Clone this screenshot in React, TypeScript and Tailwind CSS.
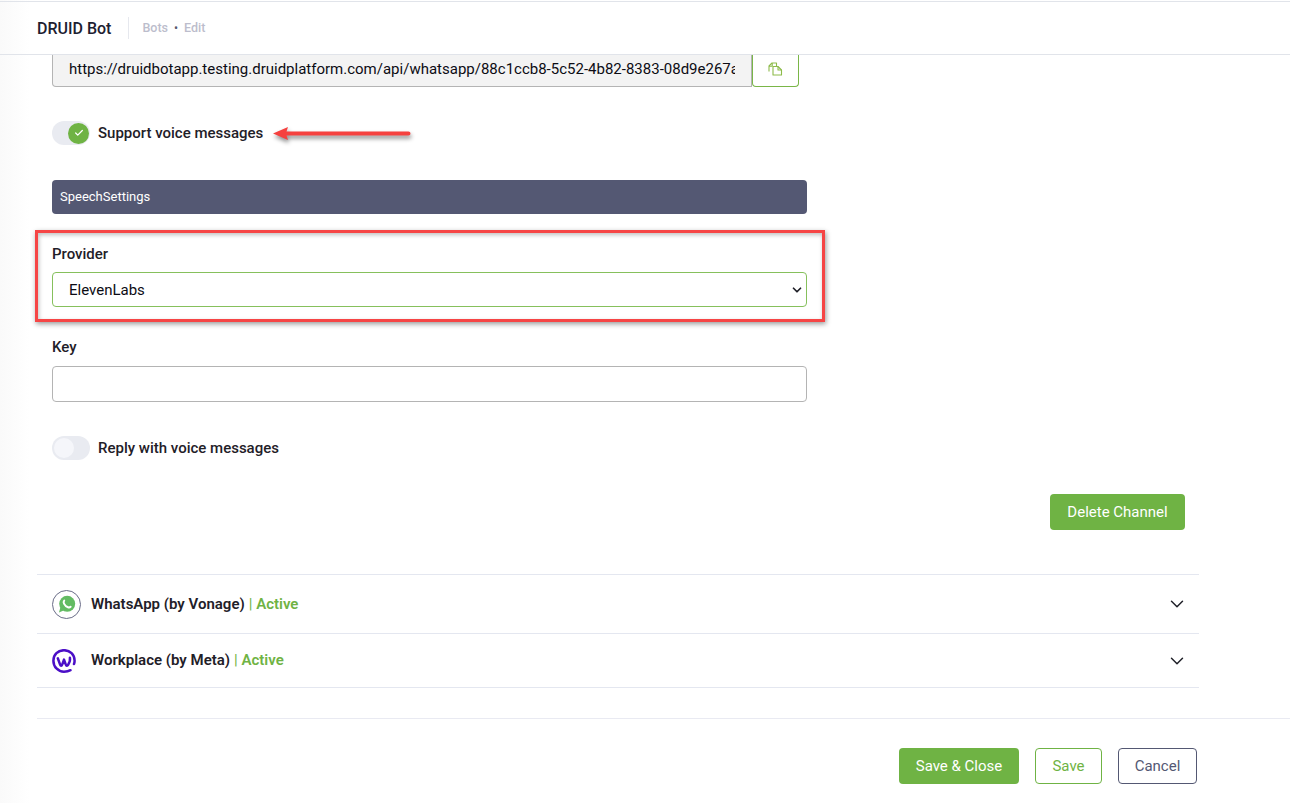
import React from 'react';
import { ChevronDown, Check } from 'lucide-react';

const CopyIcon = () => (
    <svg width="15" height="14" viewBox="0 0 15 14" fill="none" stroke="#8dbb4a" strokeWidth="1.1" strokeLinejoin="round">
        <path d="M1 9.5V4L4 1h4.5v3.5" />
        <path d="M1 4.2H4.2V1" />
        <path d="M5 4.5H10L13.5 8V13H5z" fill="#fff" />
        <path d="M10 4.5V8H13.5" />
    </svg>
);

const WhatsAppIcon = () => (
    <svg width="20" height="20" viewBox="0 0 20 20" fill="none">
        <circle cx="10.2" cy="9.8" r="8" fill="#63bb63" />
        <path d="M2 18.4L3.4 13.2L6.6 16.6z" fill="#63bb63" />
        <path d="M7.2 6.6C6.5 7.4 6.4 8.4 7 9.6C7.9 11.4 9.2 12.6 11 13.3C12 13.7 12.9 13.5 13.6 12.8" stroke="#fff" strokeWidth="2" strokeLinecap="round" />
    </svg>
);

const WorkplaceIcon = () => (
    <svg width="24" height="24" viewBox="0 0 24 24" fill="none" stroke="#4b0fc7" strokeWidth="2.5" strokeLinecap="round" strokeLinejoin="round">
        <path d="M18.5 21.2C16.8 22.2 14.4 22.7 12 22.7C6 22.7 1.4 17.8 1.4 11.7C1.4 5.7 6 1.2 12 1.2C18 1.2 22.6 5.7 22.6 11.7C22.6 13 22.4 14 22 15" />
        <path d="M5.8 9.3L8.1 15.6C8.6 17 9.7 17 10.2 15.6L12 10.6L13.8 15.6C14.3 17 15.4 17 16.1 15.8C17.4 13.6 18.5 11.3 17.9 8.8" />
    </svg>
);

const Toggle = ({ on, label }: { on?: boolean; label: string }) => (
    <div className="flex items-center gap-2">
        <div className="flex h-6 w-[38px] items-center justify-start rounded-full bg-[#e9ebf1]">
            {on ? (
                <div className="ml-4 flex h-[21px] w-[21px] items-center justify-center rounded-full bg-[#6fb344]">
                    <Check className="h-2.5 w-2.5 text-white" strokeWidth={3} />
                </div>
            ) : (
                <div className="ml-0.5 h-5 w-5 rounded-full bg-[#f5f6fa]" />
            )}
        </div>
        <span className="text-[15px] font-medium text-[#1f2028]">{label}</span>
    </div>
);

const ChannelRow = ({ name, icon, className }: { name: string; icon: React.ReactNode; className: string }) => (
    <div className={`flex items-center border-b border-[#e4e7f0] pl-[15px] pr-[11px] ${className}`}>
        <div className="flex w-[39px] items-center">{icon}</div>
        <span className="text-[15px] font-semibold text-[#1f2028]">{name}</span>
        <span className="ml-1 text-[15px] font-semibold text-[#6fb344]"><span className="font-normal">|</span> Active</span>
        <ChevronDown className="ml-auto h-[22px] w-[22px] text-[#1f2028]" strokeWidth={1.6} />
    </div>
);

export default function App() {
    return (
        <div className="relative flex h-[803px] w-[1290px] flex-col overflow-hidden bg-white font-['Roboto',sans-serif]">
            {/* faint shade from the hidden sidebar */}
            <div className="pointer-events-none absolute inset-y-0 left-0 w-[30px] bg-gradient-to-r from-[#fafafa] to-white" />

            {/* page header */}
            <header className="relative mt-px flex h-[54px] shrink-0 items-center border-b border-t border-[#e1e4ea] pl-[37px]">
                <span className="mt-px text-base font-medium text-[#1d2030]">DRUID Bot</span>
                <div className="ml-[17px] h-[22px] w-px bg-[#e6e8ee]" />
                <span className="ml-[13px] text-[12.5px] font-medium text-[#bcbdcc]">Bots</span>
                <span className="mx-[6px] text-xs text-[#55586f]">•</span>
                <span className="text-[12.5px] font-medium text-[#bcbdcc]">Edit</span>
            </header>

            <main className="relative flex flex-1 flex-col pl-[37px]">
                <div className="flex w-[1162px] flex-col">
                    <div className="pl-[15px]">
                        <div className="flex h-[32px] w-[747px]">
                            <input
                                readOnly
                                value="https://druidbotapp.testing.druidplatform.com/api/whatsapp/88c1ccb8-5c52-4b82-8383-08d9e267a1b2"
                                className="h-full w-[700px] rounded-bl border border-t-0 border-[#b4b4b4] bg-[#f3f3f3] px-4 pb-1 text-[15px] text-[#0c0c14] outline-none"
                            />
                            <button className="flex h-full w-[47px] items-center justify-center rounded-b border border-t-0 border-[#7ab648] bg-white pb-1">
                                <CopyIcon />
                            </button>
                        </div>

                        <div className="mt-[34px]">
                            <Toggle on label="Support voice messages" />
                        </div>

                        <div className="mt-[35px] flex h-[34px] w-[755px] items-center rounded bg-[#545873] px-2 text-[13px] text-white">
                            SpeechSettings
                        </div>

                        <label className="mt-[31px] block text-[15px] font-medium leading-[18px] text-[#1f2028]">Provider</label>
                        <div className="relative mt-[9px] h-[35px] w-[755px]">
                            <select className="h-full w-full appearance-none rounded border border-[#86c05c] bg-white pl-4 pt-0.5 text-[15px] text-[#0c0c14] outline-none">
                                <option>ElevenLabs</option>
                            </select>
                            <ChevronDown className="pointer-events-none absolute right-[3px] top-[11px] h-3.5 w-3.5 text-[#1f2028]" strokeWidth={3} />
                        </div>

                        <label className="mt-[31px] block text-[15px] font-medium leading-[18px] text-[#1f2028]">Key</label>
                        <input className="mt-[10px] block h-9 w-[755px] rounded border border-[#b4b4b4] bg-white px-4 text-sm outline-none" />

                        <div className="mt-[34px]">
                            <Toggle label="Reply with voice messages" />
                        </div>

                        <div className="mt-[34px] flex w-[1133px] justify-end">
                            <button className="h-9 w-[135px] rounded bg-[#6fb344] text-[15px] text-white">Delete Channel</button>
                        </div>
                    </div>

                    <div className="mt-[44px] border-t border-[#e4e7f0]">
                        <ChannelRow
                            name="WhatsApp (by Vonage)"
                            className="h-[59px]"
                            icon={
                                <div className="flex h-[29px] w-[29px] items-center justify-center rounded-full border border-[#6a6d88]">
                                    <WhatsAppIcon />
                                </div>
                            }
                        />
                        <ChannelRow
                            name="Workplace (by Meta)"
                            className="h-[54px]"
                            icon={<WorkplaceIcon />}
                        />
                    </div>
                </div>

                {/* footer actions */}
                <div className="mt-[30px] flex justify-end gap-4 border-t border-[#e9eaf2] pr-[93px] pt-[29px]">
                    <button className="h-9 w-[120px] rounded bg-[#6fb344] text-[15px] text-white">Save &amp; Close</button>
                    <button className="h-9 w-[67px] rounded border border-[#6fb344] bg-white text-[15px] text-[#6fb344]">Save</button>
                    <button className="h-9 w-[79px] rounded border border-[#545873] bg-white text-[15px] text-[#545873]">Cancel</button>
                </div>
            </main>

            {/* red annotations drawn over the page */}
            <svg className="absolute left-[270px] top-[122px] drop-shadow-[1px_3px_2px_rgba(0,0,0,0.45)]" width="145" height="24" viewBox="0 0 145 24" fill="none">
                <path d="M3 11.5L18 5L16.5 9.5H138.5a2 2 0 0 1 0 4H16.5L18 18z" fill="#f5413f" />
            </svg>
            <div className="absolute left-[35px] top-[230px] h-[92px] w-[790px] border-[3px] border-[#f64545] shadow-[1px_2px_5px_rgba(0,0,0,0.4),inset_1px_2px_4px_rgba(0,0,0,0.25)]" />
        </div>
    );
}
